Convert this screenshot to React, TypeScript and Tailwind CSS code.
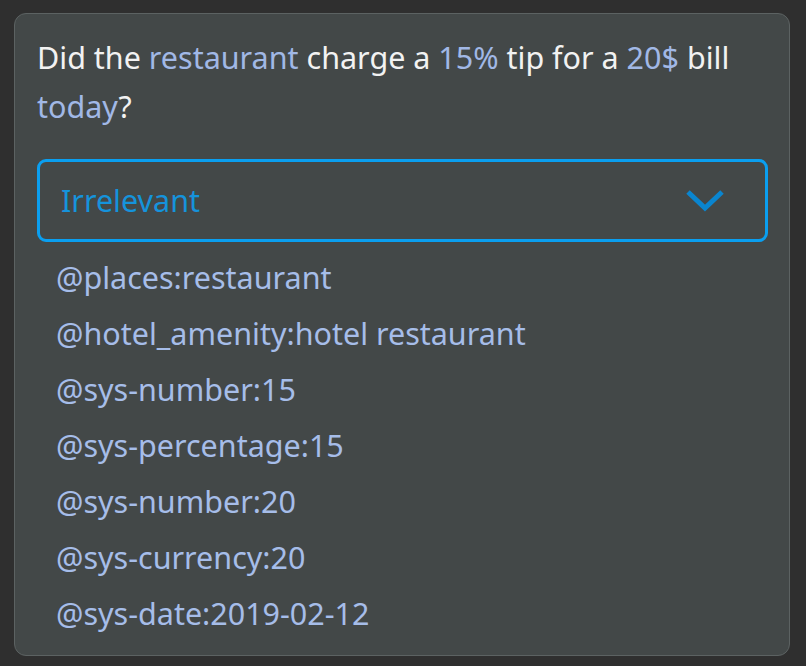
import React from "react";

const items = [
  "@places:restaurant",
  "@hotel_amenity:hotel restaurant",
  "@sys-number:15",
  "@sys-percentage:15",
  "@sys-number:20",
  "@sys-currency:20",
  "@sys-date:2019-02-12",
];

export default function App() {
  const hl = "text-[#a1b8e6]";
  return (
    <div
      className="w-[806px] h-[666px] bg-[#2f2f2f] pt-[13px] pl-[14px]"
      style={{ fontFamily: '"Noto Sans", "Open Sans", sans-serif' }}
    >
      <div className="w-[776px] h-[643px] bg-[#434848] border border-[#5c6262] rounded-[12px] pl-[22px] pr-[21px] pt-[19px]">
        <p className="text-[30.5px] leading-[49px] text-[#f2f2f2]">
          Did the <span className={hl}>restaurant</span> charge a{" "}
          <span className={hl}>15%</span> tip for a{" "}
          <span className={hl}>20$</span> bill{" "}
          <span className={hl}>today</span>?
        </p>
        <div className="mt-[28px] h-[83px] border-[3px] border-[#0a9ff0] rounded-[9px] flex items-center justify-between pl-[21px] pr-[40px]">
          <span className="text-[30.5px] text-[#1593dc]">Irrelevant</span>
          <svg width="40" height="24" viewBox="0 0 40 24" fill="none">
            <path d="M3 3 L20 19 L37 3" stroke="#0a85cf" strokeWidth="5" />
          </svg>
        </div>
        <div className="mt-[8px] pl-[19px]">
          {items.map((t) => (
            <div key={t} className="h-[56px] flex items-center text-[30.5px] text-[#a6bde9]">
              {t}
            </div>
          ))}
        </div>
      </div>
    </div>
  );
}
